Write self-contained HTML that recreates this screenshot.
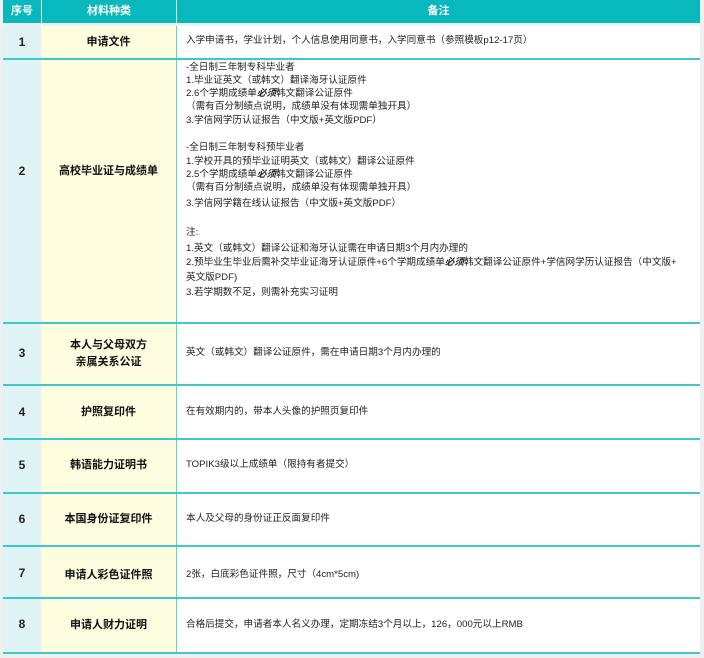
<!DOCTYPE html>
<html><head><meta charset="utf-8"><style>
body{margin:0;width:704px;height:658px;background:#efefef;position:relative;overflow:hidden;font-family:"Liberation Sans","Noto Sans CJK SC",sans-serif;}
.a{position:absolute}
.hd{background:#07b8bc;color:#fff;font-weight:bold;font-size:11px;top:0;height:23px;line-height:23px;text-align:center}
.c1{background:#dff2f4;left:3px;width:38px}
.c2{background:#fffde0;left:41px;width:135px;border-right:1.5px solid #5ed6cc}
.c3{background:#fff;left:177px;width:523px}
.n{font-weight:bold;font-size:12px;text-align:center;color:#222}
.t{font-weight:bold;font-size:11px;text-align:center;color:#111;line-height:17px}
.x{font-size:9.6px;color:#222;white-space:nowrap;left:186px;line-height:12px}
.ln{left:3px;width:697px;height:2px;background:#3cc9c9}
b{font-style:italic}
</style></head><body>
<div class="a hd" style="left:3px;width:38px">序号</div>
<div class="a hd" style="left:42px;width:134px">材料种类</div>
<div class="a hd" style="left:177px;width:523px">备注</div>
<div class="a c1" style="top:26px;height:627px"></div>
<div class="a c2" style="top:26px;height:627px"></div>
<div class="a c3" style="top:26px;height:627px"></div>
<div class="a ln" style="top:58px"></div>
<div class="a ln" style="top:322px"></div>
<div class="a ln" style="top:384px"></div>
<div class="a ln" style="top:438px"></div>
<div class="a ln" style="top:492px"></div>
<div class="a ln" style="top:545px"></div>
<div class="a ln" style="top:597px"></div>
<div class="a ln" style="top:652px"></div>

<div class="a n c1" style="top:35px;background:none">1</div>
<div class="a t" style="left:41px;width:135px;top:34px">申请文件</div>
<div class="a x" style="top:35px">入学申请书，学业计划，个人信息使用同意书，入学同意书（参照模板p12-17页）</div>

<div class="a n c1" style="top:164px;background:none">2</div>
<div class="a t" style="left:41px;width:135px;top:163px">高校毕业证与成绩单</div>
<div class="a x" style="top:62px">-全日制三年制专科毕业者</div>
<div class="a x" style="top:75px">1.毕业证英文（或韩文）翻译海牙认证原件</div>
<div class="a x" style="top:88px">2.6个学期成绩单<b>必须</b>韩文翻译公证原件</div>
<div class="a x" style="top:101px">（需有百分制绩点说明，成绩单没有体现需单独开具）</div>
<div class="a x" style="top:115px">3.学信网学历认证报告（中文版+英文版PDF）</div>
<div class="a x" style="top:142px">-全日制三年制专科预毕业者</div>
<div class="a x" style="top:156px">1.学校开具的预毕业证明英文（或韩文）翻译公证原件</div>
<div class="a x" style="top:169px">2.5个学期成绩单<b>必须</b>韩文翻译公证原件</div>
<div class="a x" style="top:182px">（需有百分制绩点说明，成绩单没有体现需单独开具）</div>
<div class="a x" style="top:198px">3.学信网学籍在线认证报告（中文版+英文版PDF）</div>
<div class="a x" style="top:227px">注:</div>
<div class="a x" style="top:243px">1.英文（或韩文）翻译公证和海牙认证需在申请日期3个月内办理的</div>
<div class="a x" style="top:257px">2.预毕业生毕业后需补交毕业证海牙认证原件+6个学期成绩单<b>必须</b>韩文翻译公证原件+学信网学历认证报告（中文版+</div>
<div class="a x" style="top:272px">英文版PDF)</div>
<div class="a x" style="top:287px">3.若学期数不足，则需补充实习证明</div>

<div class="a n c1" style="top:346px;background:none">3</div>
<div class="a t" style="left:41px;width:135px;top:337px">本人与父母双方<br>亲属关系公证</div>
<div class="a x" style="top:347px">英文（或韩文）翻译公证原件，需在申请日期3个月内办理的</div>

<div class="a n c1" style="top:405px;background:none">4</div>
<div class="a t" style="left:41px;width:135px;top:404px">护照复印件</div>
<div class="a x" style="top:406px">在有效期内的，带本人头像的护照页复印件</div>

<div class="a n c1" style="top:458px;background:none">5</div>
<div class="a t" style="left:41px;width:135px;top:457px">韩语能力证明书</div>
<div class="a x" style="top:459px">TOPIK3级以上成绩单（限持有者提交）</div>

<div class="a n c1" style="top:512px;background:none">6</div>
<div class="a t" style="left:41px;width:135px;top:511px">本国身份证复印件</div>
<div class="a x" style="top:513px">本人及父母的身份证正反面复印件</div>

<div class="a n c1" style="top:566px;background:none">7</div>
<div class="a t" style="left:41px;width:135px;top:567px">申请人彩色证件照</div>
<div class="a x" style="top:569px">2张，白底彩色证件照，尺寸（4cm*5cm)</div>

<div class="a n c1" style="top:617px;background:none">8</div>
<div class="a t" style="left:41px;width:135px;top:617px">申请人财力证明</div>
<div class="a x" style="top:619px">合格后提交，申请者本人名义办理，定期冻结3个月以上，126，000元以上RMB</div>
</body></html>
